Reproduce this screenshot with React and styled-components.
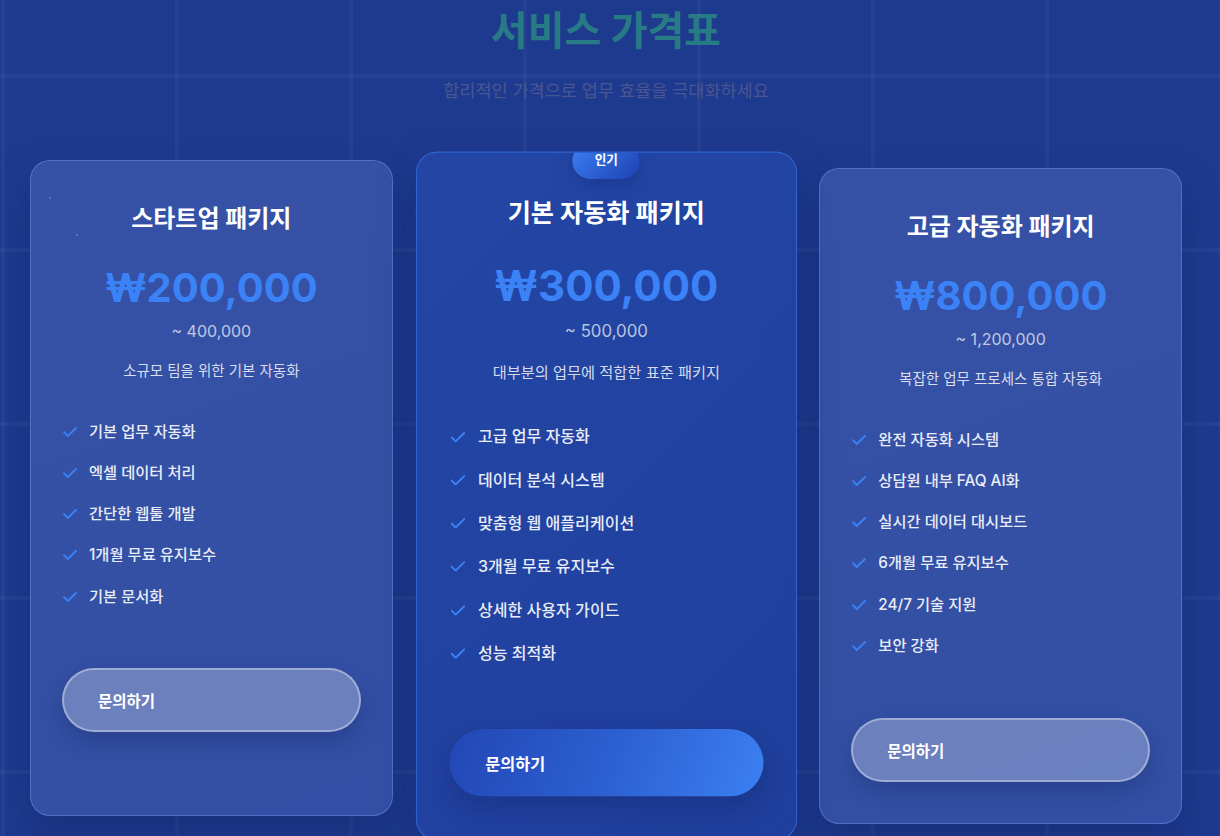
import styled, { createGlobalStyle } from "styled-components";

const GlobalStyle = createGlobalStyle`
  html, body {
    margin: 0;
    padding: 0;
    overflow: hidden;
    background: #1e3a8f;
  }
  body {
    font-family: "Inter", "Noto Sans CJK KR", sans-serif;
  }
  * {
    box-sizing: border-box;
  }
`;

const Section = styled.section`
  width: 1220px;
  height: 836px;
  padding: 7px 38px 0 30px;
  background-color: #1e3a8f;
  background-image:
    linear-gradient(rgba(255, 255, 255, 0.035) 4px, transparent 4px),
    linear-gradient(90deg, rgba(255, 255, 255, 0.035) 4px, transparent 4px);
  background-size: 174px 174px;
  background-position: 1px 74px;
  overflow: hidden;
`;

const Header = styled.header`
  text-align: center;
`;

const Title = styled.h2`
  margin: 0;
  font-size: 40px;
  line-height: 48px;
  font-weight: 700;
  color: #287a84;
`;

const Subtitle = styled.p`
  margin: 24px 0 0;
  font-size: 17.5px;
  line-height: 24px;
  color: #4a5690;
`;

const Grid = styled.div`
  display: grid;
  grid-template-columns: repeat(3, 1fr);
  gap: 32px;
  margin-top: 65px;
  align-items: stretch;
`;

const Card = styled.article`
  position: relative;
  overflow: hidden;
  display: flex;
  flex-direction: column;
  align-items: stretch;
  padding: 42px 32px 41px;
  border-radius: 20px;
  text-align: center;
  background: ${(p) =>
    p.$popular
      ? "linear-gradient(135deg, #2346a4 0%, #2142a0 60%, #1f3f9c 100%)"
      : "linear-gradient(160deg, #3651a6 0%, #3450a4 60%, #3350a6 100%)"};
  border: 1px solid
    ${(p) => (p.$popular ? "rgba(59, 130, 246, 0.55)" : "rgba(120, 150, 240, 0.45)")};
  box-shadow: 0 20px 40px rgba(10, 20, 70, 0.25);
  transform: ${(p) => (p.$popular ? "scale(1.05)" : `translateY(${p.$shift || 0}px)`)};
  z-index: ${(p) => (p.$popular ? 2 : 1)};
`;

const Badge = styled.span`
  position: absolute;
  top: -9px;
  left: 50%;
  transform: translateX(-50%);
  width: 64px;
  height: 34px;
  border-radius: 17px;
  padding-top: 8px;
  background: linear-gradient(135deg, #3b82f6, #1e40af);
  box-shadow: 0 6px 14px rgba(20, 40, 120, 0.35);
  color: #fff;
  font-size: 12px;
  font-weight: 700;
  line-height: 16px;
`;

const Dot = styled.span`
  position: absolute;
  width: 2px;
  height: 2px;
  border-radius: 50%;
  background: #2fb3a8;
  opacity: 0.8;
`;

const Name = styled.h3`
  margin: 0;
  font-size: 24px;
  line-height: 32px;
  font-weight: 700;
  color: #ffffff;
`;

const Price = styled.div`
  margin-top: 28px;
  font-size: 40px;
  line-height: 50px;
  font-weight: 700;
  color: #3b82f6;
`;

const Range = styled.div`
  margin-top: 6px;
  font-size: 16px;
  line-height: 24px;
  color: rgba(255, 255, 255, 0.7);
`;

const Desc = styled.p`
  margin: 18px 0 0;
  font-size: 14.5px;
  line-height: 20px;
  color: rgba(255, 255, 255, 0.82);
`;

const Features = styled.ul`
  list-style: none;
  margin: 30px 0 0;
  padding: 0;
  text-align: left;
`;

const Feature = styled.li`
  display: flex;
  align-items: center;
  gap: 12px;
  padding: 8.65px 0;
  font-size: 15.3px;
  line-height: 24px;
  font-weight: 500;
  color: #e8ecf8;
`;

const CheckIcon = () => (
  <svg width="14" height="10" viewBox="0 0 14 10" fill="none">
    <path
      d="M1 5.2 4.8 9 13 1"
      stroke="#3b82f6"
      strokeWidth="1.8"
      strokeLinecap="round"
      strokeLinejoin="round"
    />
  </svg>
);

const Button = styled.button`
  margin: 51px -1px 0;
  height: 64px;
  padding: 0 0 0 34px;
  border-radius: 32px;
  text-align: left;
  font-family: inherit;
  font-size: 15.5px;
  font-weight: 700;
  color: #ffffff;
  cursor: pointer;
  border: ${(p) => (p.$primary ? "none" : "2px solid rgba(255, 255, 255, 0.35)")};
  background: ${(p) =>
    p.$primary
      ? "linear-gradient(110deg, #2247b4 0%, #2c5fd0 50%, #3b80f2 100%)"
      : "rgba(255, 255, 255, 0.28)"};
  box-shadow: 0 10px 24px rgba(10, 20, 70, 0.25);
`;

const plans = [
  {
    name: "스타트업 패키지",
    price: "₩200,000",
    range: "~ 400,000",
    desc: "소규모 팀을 위한 기본 자동화",
    shift: -8,
    dots: true,
    features: ["기본 업무 자동화", "엑셀 데이터 처리", "간단한 웹툴 개발", "1개월 무료 유지보수", "기본 문서화"],
  },
  {
    name: "기본 자동화 패키지",
    price: "₩300,000",
    range: "~ 500,000",
    desc: "대부분의 업무에 적합한 표준 패키지",
    popular: true,
    features: [
      "고급 업무 자동화",
      "데이터 분석 시스템",
      "맞춤형 웹 애플리케이션",
      "3개월 무료 유지보수",
      "상세한 사용자 가이드",
      "성능 최적화",
    ],
  },
  {
    name: "고급 자동화 패키지",
    price: "₩800,000",
    range: "~ 1,200,000",
    desc: "복잡한 업무 프로세스 통합 자동화",
    features: [
      "완전 자동화 시스템",
      "상담원 내부 FAQ AI화",
      "실시간 데이터 대시보드",
      "6개월 무료 유지보수",
      "24/7 기술 지원",
      "보안 강화",
    ],
  },
];

const PlanCard = ({ plan }) => (
  <Card $popular={plan.popular} $shift={plan.shift}>
    {plan.popular && <Badge>인기</Badge>}
    {plan.dots && (
      <>
        <Dot style={{ left: 18, top: 36 }} />
        <Dot style={{ left: 45, top: 73 }} />
      </>
    )}
    <Name>{plan.name}</Name>
    <Price>{plan.price}</Price>
    <Range>{plan.range}</Range>
    <Desc>{plan.desc}</Desc>
    <Features>
      {plan.features.map((f) => (
        <Feature key={f}>
          <CheckIcon />
          {f}
        </Feature>
      ))}
    </Features>
    <Button $primary={plan.popular}>문의하기</Button>
  </Card>
);

const App = () => {
  return (
    <>
      <GlobalStyle />
      <Section>
        <Header>
          <Title>서비스 가격표</Title>
          <Subtitle>합리적인 가격으로 업무 효율을 극대화하세요</Subtitle>
        </Header>
        <Grid>
          {plans.map((p) => (
            <PlanCard key={p.name} plan={p} />
          ))}
        </Grid>
      </Section>
    </>
  );
};

export default App;
